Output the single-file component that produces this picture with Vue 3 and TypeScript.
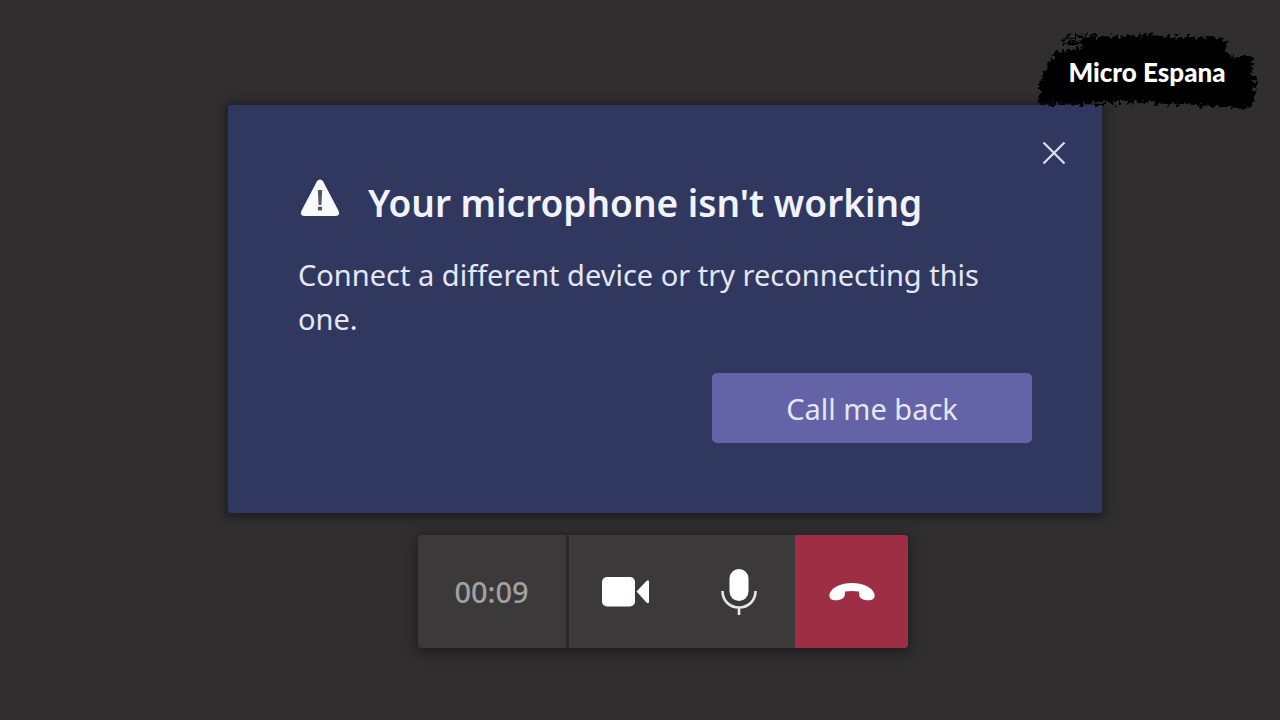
<script setup lang="ts">
import { computed, ref } from 'vue'

const seconds = ref(9)
const dialogOpen = ref(true)

const elapsed = computed(() => {
  const pad = (n: number) => String(n).padStart(2, '0')
  return `${pad(Math.floor(seconds.value / 60))}:${pad(seconds.value % 60)}`
})
</script>

<template>
  <main class="stage">
    <section v-if="dialogOpen" class="dialog" role="alertdialog" aria-labelledby="dialog-title" aria-describedby="dialog-text">
      <div class="dialog-top">
        <button class="close" type="button" aria-label="Close" @click="dialogOpen = false">
          <svg viewBox="0 0 24 24" width="24" height="24"><path d="M1.5 1.5l21 21M22.5 1.5l-21 21" fill="none" stroke="#dcdff0" stroke-width="2.2" /></svg>
        </button>
      </div>
      <div class="dialog-body">
        <div class="heading">
          <svg class="warning" viewBox="0 0 40 38" width="40" height="38">
            <path d="M17 2.200Q20-1.400 23 2.200L38.400 31.500Q40.600 37 35.500 37H4.500Q-.6 37 1.600 31.500Z" fill="#fafafe" />
            <path d="M17.800 11h4.400l-.8 15h-2.800zM17.900 27.800h4.200v3.600h-4.200z" fill="#555565" />
          </svg>
          <h1 id="dialog-title">Your microphone isn't working</h1>
        </div>
        <p id="dialog-text">Connect a different device or try reconnecting this one.</p>
        <button class="callback" type="button">Call me back</button>
      </div>
    </section>

    <div class="controls" role="toolbar" aria-label="Call controls">
      <time class="timer">{{ elapsed }}</time>
      <button class="control" type="button" aria-label="Camera">
        <svg viewBox="0 0 48 30" width="48" height="30" fill="#fff">
          <rect x="0" y="0" width="33" height="29.500" rx="5" />
          <path d="M34.500 14.500L44.500 4Q47 2.300 47 5v19.500Q47 27.500 44.500 25.500z" />
        </svg>
      </button>
      <button class="control" type="button" aria-label="Microphone">
        <svg viewBox="0 0 36 48" width="36" height="48">
          <rect x="8.500" y="1" width="19" height="32" rx="9.500" fill="#fff" />
          <path d="M1.500 23C1.500 33 9 39.500 18 39.500S34.500 33 34.500 23M18 39.500V47" fill="none" stroke="#e8e8e8" stroke-width="2.600" />
        </svg>
      </button>
      <button class="control hangup" type="button" aria-label="Hang up">
        <svg viewBox="0 0 46 20" width="46" height="20">
          <path d="M.5 12C3 5 12 1 23 1s20 4 22.500 11c.8 3-1 6-4.500 6.200-5 .4-10-1-10.700-4.700L30 9.500Q23 8.500 16 9.500L15.700 13.500C15 17 10 18.600 5 18.200 1.500 18-.3 15 .5 12z" fill="#fff" />
        </svg>
      </button>
    </div>

    <div class="badge">
      <svg class="brush" viewBox="0 0 224 80" preserveAspectRatio="none" aria-hidden="true">
        <defs>
          <filter id="rough" x="-5%" y="-10%" width="110%" height="120%">
            <feTurbulence type="fractalNoise" baseFrequency="0.25" numOctaves="4" seed="7" />
            <feDisplacementMap in="SourceGraphic" scale="12" xChannelSelector="R" yChannelSelector="G" />
          </filter>
        </defs>
        <g filter="url(#rough)">
          <path d="M46 6L84 4 110 3 150 5 180 5 192 8 191 20 196 24 216 24 218 32 217 40 221 48 219 58 220 66 216 75 208 77 190 74 168 74 150 72 134 73 112 70 90 71 62 71 44 73 24 72 6 73 3 66 7 60 2 54 8 46 7 40 14 34 12 30 19 26 17 21 34 18 50 14 34 12 48 10z" />
          <path d="M26 5L60 3V6L26 7.500zM28 10L60 8V11L30 13z" />
        </g>
      </svg>
      <span class="badge-text">Micro Espana</span>
    </div>
  </main>
</template>

<style>
body {
  margin: 0;
  background: #302e2f;
}
</style>

<style scoped>
.stage {
  box-sizing: border-box;
  position: relative;
  min-height: 100vh;
  padding: 105px 0 72px 50px;
  display: flex;
  flex-direction: column;
  align-items: center;
  gap: 22px;
  overflow: hidden;
  background: #302e2f;
  font-family: "Noto Sans", "Open Sans", sans-serif;
}

button {
  margin: 0;
  padding: 0;
  border: 0;
  font: inherit;
  color: inherit;
  cursor: pointer;
}

svg {
  display: block;
}

.dialog {
  box-sizing: border-box;
  width: 100%;
  max-width: 874px;
  border-radius: 4px;
  background: #31385f;
  box-shadow: 0 1px 10px 3px #1d1d1e, inset 0 0 4px 1px #333869;
  color: #e4e6f3;
}

.dialog-top {
  display: flex;
  justify-content: flex-end;
  padding: 28px 28px 0;
}

.close {
  width: 40px;
  height: 40px;
  display: grid;
  place-items: center;
  background: none;
}

.dialog-body {
  display: flex;
  flex-direction: column;
  padding: 4px 70px 70px;
}

.heading {
  display: flex;
  align-items: flex-start;
  gap: 28px;
  padding-left: 2px;
}

.warning {
  flex: none;
  margin-top: 2px;
}

h1 {
  margin: 0;
  padding-top: 4px;
  font-size: 37px;
  line-height: 44px;
  font-weight: 600;
  color: #f1f2fa;
}

p {
  margin: 28px 0 32px;
  font-size: 29px;
  line-height: 44px;
}

.callback {
  align-self: flex-end;
  width: 320px;
  height: 70px;
  border-radius: 5px;
  background: #6463a8;
  font-size: 29px;
}

.controls {
  display: flex;
  margin-right: 4px;
  border-radius: 4px;
  background: #3b3939;
  box-shadow: 0 3px 12px 2px #1f1d1e;
}

.timer {
  box-sizing: border-box;
  width: 151px;
  padding-right: 1px;
  border-right: 3px solid #292728;
  display: grid;
  place-items: center;
  font-size: 29px;
  font-weight: 500;
  color: #a3a19f;
}

.control {
  width: 113px;
  height: 113px;
  display: grid;
  place-items: center;
  background: none;
}

.hangup {
  border-radius: 0 4px 4px 0;
  background: #9e2e44;
}

.badge {
  position: absolute;
  top: 32px;
  right: 21px;
  width: 224px;
  height: 80px;
  display: grid;
  place-items: center;
}

.brush {
  grid-area: 1 / 1;
  width: 100%;
  height: 100%;
  overflow: visible;
}

.badge-text {
  grid-area: 1 / 1;
  z-index: 1;
  font-family: Lato, sans-serif;
  font-size: 26px;
  line-height: 32px;
  font-weight: 900;
  color: #fff;
}
</style>
